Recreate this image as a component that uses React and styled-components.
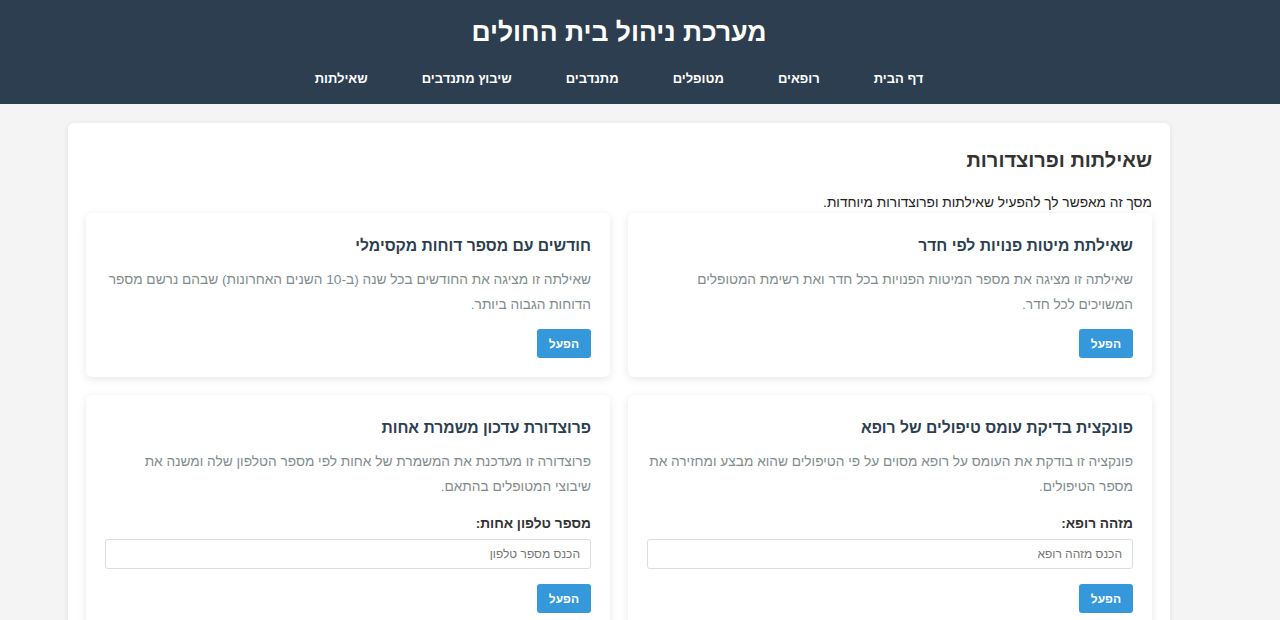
import React from "react";
import styled, { createGlobalStyle } from "styled-components";

const GlobalStyle = createGlobalStyle`
  body {
    margin: 0;
    background: #f4f4f4;
    font-family: "Liberation Sans", Arial, sans-serif;
    direction: rtl;
  }
`;

// Header
const Header = styled.header`
  background: #2c3e50;
  color: #fff;
  height: 104px;
  padding: 16px 42px 0 0;
  box-sizing: border-box;
`;

const Title = styled.h1`
  margin: 0;
  font-size: 26.5px;
  font-weight: bold;
  text-align: center;
  line-height: 32px;
`;

const Nav = styled.nav`
  display: flex;
  justify-content: center;
  margin-top: 23px;
`;

const NavLink = styled.a`
  color: #fff;
  font-size: 13px;
  font-weight: bold;
  line-height: 16px;
  padding: 0 27px;
  text-decoration: none;
  cursor: pointer;
`;

// Main panel
const Panel = styled.main`
  margin: 19px 110px 0 68px;
  background: #fff;
  border-radius: 6px;
  box-shadow: 0 1px 6px rgba(0, 0, 0, 0.08);
  padding: 22px 18px 20px;
`;

const PageTitle = styled.h2`
  margin: 0;
  font-size: 20px;
  font-weight: bold;
  color: #333;
  line-height: 30px;
`;

const Intro = styled.p`
  margin: 19px 0 0;
  font-size: 13.7px;
  color: #222;
  line-height: 18px;
`;

const Grid = styled.div`
  display: grid;
  grid-template-columns: 1fr 1fr;
  gap: 18px;
  margin-top: 1px;
`;

const Card = styled.section`
  background: #fff;
  border-radius: 6px;
  box-shadow: 0 2px 8px rgba(0, 0, 0, 0.1);
  padding: 22px 19px 19px;
`;

const CardTitle = styled.h3`
  margin: 0;
  font-size: 15.7px;
  font-weight: bold;
  color: #2c3e50;
  line-height: 22px;
`;

const CardText = styled.p`
  margin: 10px 0 0;
  font-size: 13.7px;
  color: #7f8c8d;
  line-height: 25px;
`;

const Label = styled.label`
  display: block;
  margin-top: 16px;
  font-size: 13.7px;
  font-weight: bold;
  color: #333;
  line-height: 18px;
`;

const Input = styled.input`
  display: block;
  width: 100%;
  box-sizing: border-box;
  height: 30px;
  margin-top: 6px;
  border: 1px solid #ddd;
  border-radius: 3px;
  padding: 0 10px;
  font-family: inherit;
  font-size: 12px;
  direction: rtl;

  &::placeholder {
    color: #757575;
  }
`;

const RunButton = styled.button`
  display: block;
  margin-top: ${(p) => (p.$afterInput ? "15px" : "12px")};
  background: #3498db;
  color: #fff;
  border: none;
  border-radius: 3px;
  height: 29px;
  padding: 0 12px;
  font-family: inherit;
  font-size: 12px;
  font-weight: bold;
  cursor: pointer;
`;

const navItems = ["דף הבית", "רופאים", "מטופלים", "מתנדבים", "שיבוץ מתנדבים", "שאילתות"];

const cards = [
  {
    title: "שאילתת מיטות פנויות לפי חדר",
    text: "שאילתה זו מציגה את מספר המיטות הפנויות בכל חדר ואת רשימת המטופלים המשויכים לכל חדר.",
  },
  {
    title: "חודשים עם מספר דוחות מקסימלי",
    text: "שאילתה זו מציגה את החודשים בכל שנה (ב-10 השנים האחרונות) שבהם נרשם מספר הדוחות הגבוה ביותר.",
  },
  {
    title: "פונקצית בדיקת עומס טיפולים של רופא",
    text: "פונקציה זו בודקת את העומס על רופא מסוים על פי הטיפולים שהוא מבצע ומחזירה את מספר הטיפולים.",
    label: "מזהה רופא:",
    placeholder: "הכנס מזהה רופא",
  },
  {
    title: "פרוצדורת עדכון משמרת אחות",
    text: "פרוצדורה זו מעדכנת את המשמרת של אחות לפי מספר הטלפון שלה ומשנה את שיבוצי המטופלים בהתאם.",
    label: "מספר טלפון אחות:",
    placeholder: "הכנס מספר טלפון",
  },
];

export default function App() {
  return (
    <>
      <GlobalStyle />
      <Header>
        <Title>מערכת ניהול בית החולים</Title>
        <Nav>
          {navItems.map((item) => (
            <NavLink key={item}>{item}</NavLink>
          ))}
        </Nav>
      </Header>
      <Panel>
        <PageTitle>שאילתות ופרוצדורות</PageTitle>
        <Intro>מסך זה מאפשר לך להפעיל שאילתות ופרוצדורות מיוחדות.</Intro>
        <Grid>
          {cards.map((c) => (
            <Card key={c.title}>
              <CardTitle>{c.title}</CardTitle>
              <CardText>{c.text}</CardText>
              {c.label && (
                <>
                  <Label>{c.label}</Label>
                  <Input placeholder={c.placeholder} />
                </>
              )}
              <RunButton $afterInput={!!c.label}>הפעל</RunButton>
            </Card>
          ))}
        </Grid>
      </Panel>
    </>
  );
}
